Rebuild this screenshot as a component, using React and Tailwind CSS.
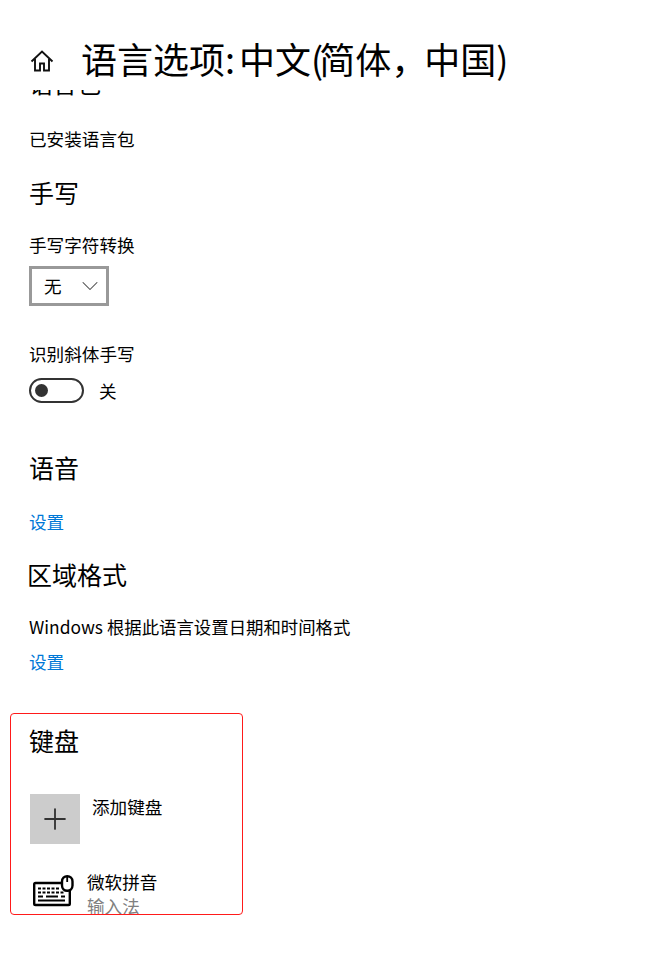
import { ChevronDown, Plus } from 'lucide-react';

const cjk = { fontFamily: '"Noto Sans CJK SC", "Liberation Sans", sans-serif' };

function HomeIcon() {
  return (
    <svg width="24" height="24" viewBox="0 0 24 24" fill="none" stroke="#111" strokeWidth="1.9" className="mt-[16px] ml-[1px]">
      <path d="M1.5 12.5 12 2.5l10.5 10" />
      <path d="M5 10v11.5h5v-7h4v7h5V10" />
    </svg>
  );
}

function KeyboardIcon() {
  return (
    <svg width="41" height="32" viewBox="0 0 41 32" fill="none" className="text-black">
      <path d="M28 8H2.5a1.3 1.3 0 0 0-1.3 1.3v19.4a1.3 1.3 0 0 0 1.3 1.3h33a1.3 1.3 0 0 0 1.3-1.3V16" stroke="currentColor" strokeWidth="2.4" />
      <rect x="29" y="1.2" width="10.5" height="14.6" rx="5.2" fill="white" stroke="currentColor" strokeWidth="2.4" />
      <path d="M34.2 2v5" stroke="currentColor" strokeWidth="1.8" />
      <path d="M5 13.5h22M5 17.5h27" stroke="currentColor" strokeWidth="2" strokeDasharray="3 1.5" />
      <path d="M5 21.5h5M13 21.5h12M28 21.5h4M5 25.5h27" stroke="currentColor" strokeWidth="2" />
    </svg>
  );
}

export default function App() {
  return (
    <div className="w-[659px] h-[967px] bg-white text-black overflow-hidden" style={cjk}>
      {/* Title bar */}
      <div className="h-[90px] pt-[33px] pl-[29px] flex items-start bg-white">
        <HomeIcon />
        <h1 className="ml-[27px] text-[36px] leading-[50px] font-normal whitespace-nowrap">
          语言选项<span className="tracking-[-2px]">: </span>中文<span className="tracking-[-4px]">(</span>简体<span className="tracking-[-3px]">，</span>中国<span className="tracking-[-4px]">)</span>
        </h1>
      </div>

      {/* Scrolled content */}
      <div className="pl-[29px]">
        <div className="h-[9px] overflow-hidden relative">
          <div className="absolute left-0 bottom-0 text-[24px] leading-[32px]">语言包</div>
        </div>

        <p className="mt-[28px] text-[17.6px] leading-[24px]">已安装语言包</p>

        <h2 className="mt-[25px] text-[25px] leading-[32px] font-normal">手写</h2>

        <p className="mt-[25px] text-[17.6px] leading-[24px]">手写字符转换</p>
        <div className="mt-[9px] w-[80px] h-[40px] border-[3px] border-[#999999] flex items-center pl-[12px] pr-[2px] justify-between">
          <span className="text-[17.6px] leading-[24px]">无</span>
          <ChevronDown className="w-[28px] h-[28px] text-[#444]" strokeWidth={0.9} />
        </div>

        <p className="mt-[36px] text-[17.6px] leading-[24px]">识别斜体手写</p>
        <div className="mt-[12px] flex items-center">
          <div className="w-[55px] h-[25px] rounded-full border-[2px] border-[#333] flex items-center pl-[4px]">
            <div className="w-[13px] h-[13px] rounded-full bg-[#333]" />
          </div>
          <span className="ml-[15px] text-[17.6px] leading-[24px]">关</span>
        </div>

        <h2 className="mt-[48px] text-[25px] leading-[32px] font-normal">语音</h2>
        <p className="mt-[27px] text-[17.6px] leading-[24px] text-[#0078d7]">设置</p>

        <h2 className="mt-[24px] -ml-[2px] text-[25px] leading-[32px] font-normal">区域格式</h2>
        <p className="mt-[25px] text-[17.4px] leading-[24px] whitespace-nowrap">Windows 根据此语言设置日期和时间格式</p>
        <p className="mt-[11px] text-[17.6px] leading-[24px] text-[#0078d7]">设置</p>
      </div>

      {/* Keyboard section */}
      <div className="mt-[39px] ml-[10px] w-[233px] h-[202px] border border-[#ff1a1a] rounded-[4px] overflow-hidden pl-[18px]">
        <h2 className="mt-[10px] text-[25px] leading-[32px] font-normal">键盘</h2>
        <div className="mt-[38px] flex items-start">
          <div className="ml-[1px] w-[50px] h-[50px] bg-[#cccccc] flex items-center justify-center">
            <Plus className="w-[34px] h-[34px] text-[#333]" strokeWidth={1.3} />
          </div>
          <span className="ml-[12px] text-[17.6px] leading-[24px] mt-[1px]">添加键盘</span>
        </div>
        <div className="mt-[26px] flex items-start">
          <div className="ml-[4px] mt-[5px] shrink-0"><KeyboardIcon /></div>
          <div className="ml-[13px]">
            <div className="text-[17.6px] leading-[24px]">微软拼音</div>
            <div className="text-[17.6px] leading-[23px] text-[#808080]">输入法</div>
          </div>
        </div>
      </div>
    </div>
  );
}
